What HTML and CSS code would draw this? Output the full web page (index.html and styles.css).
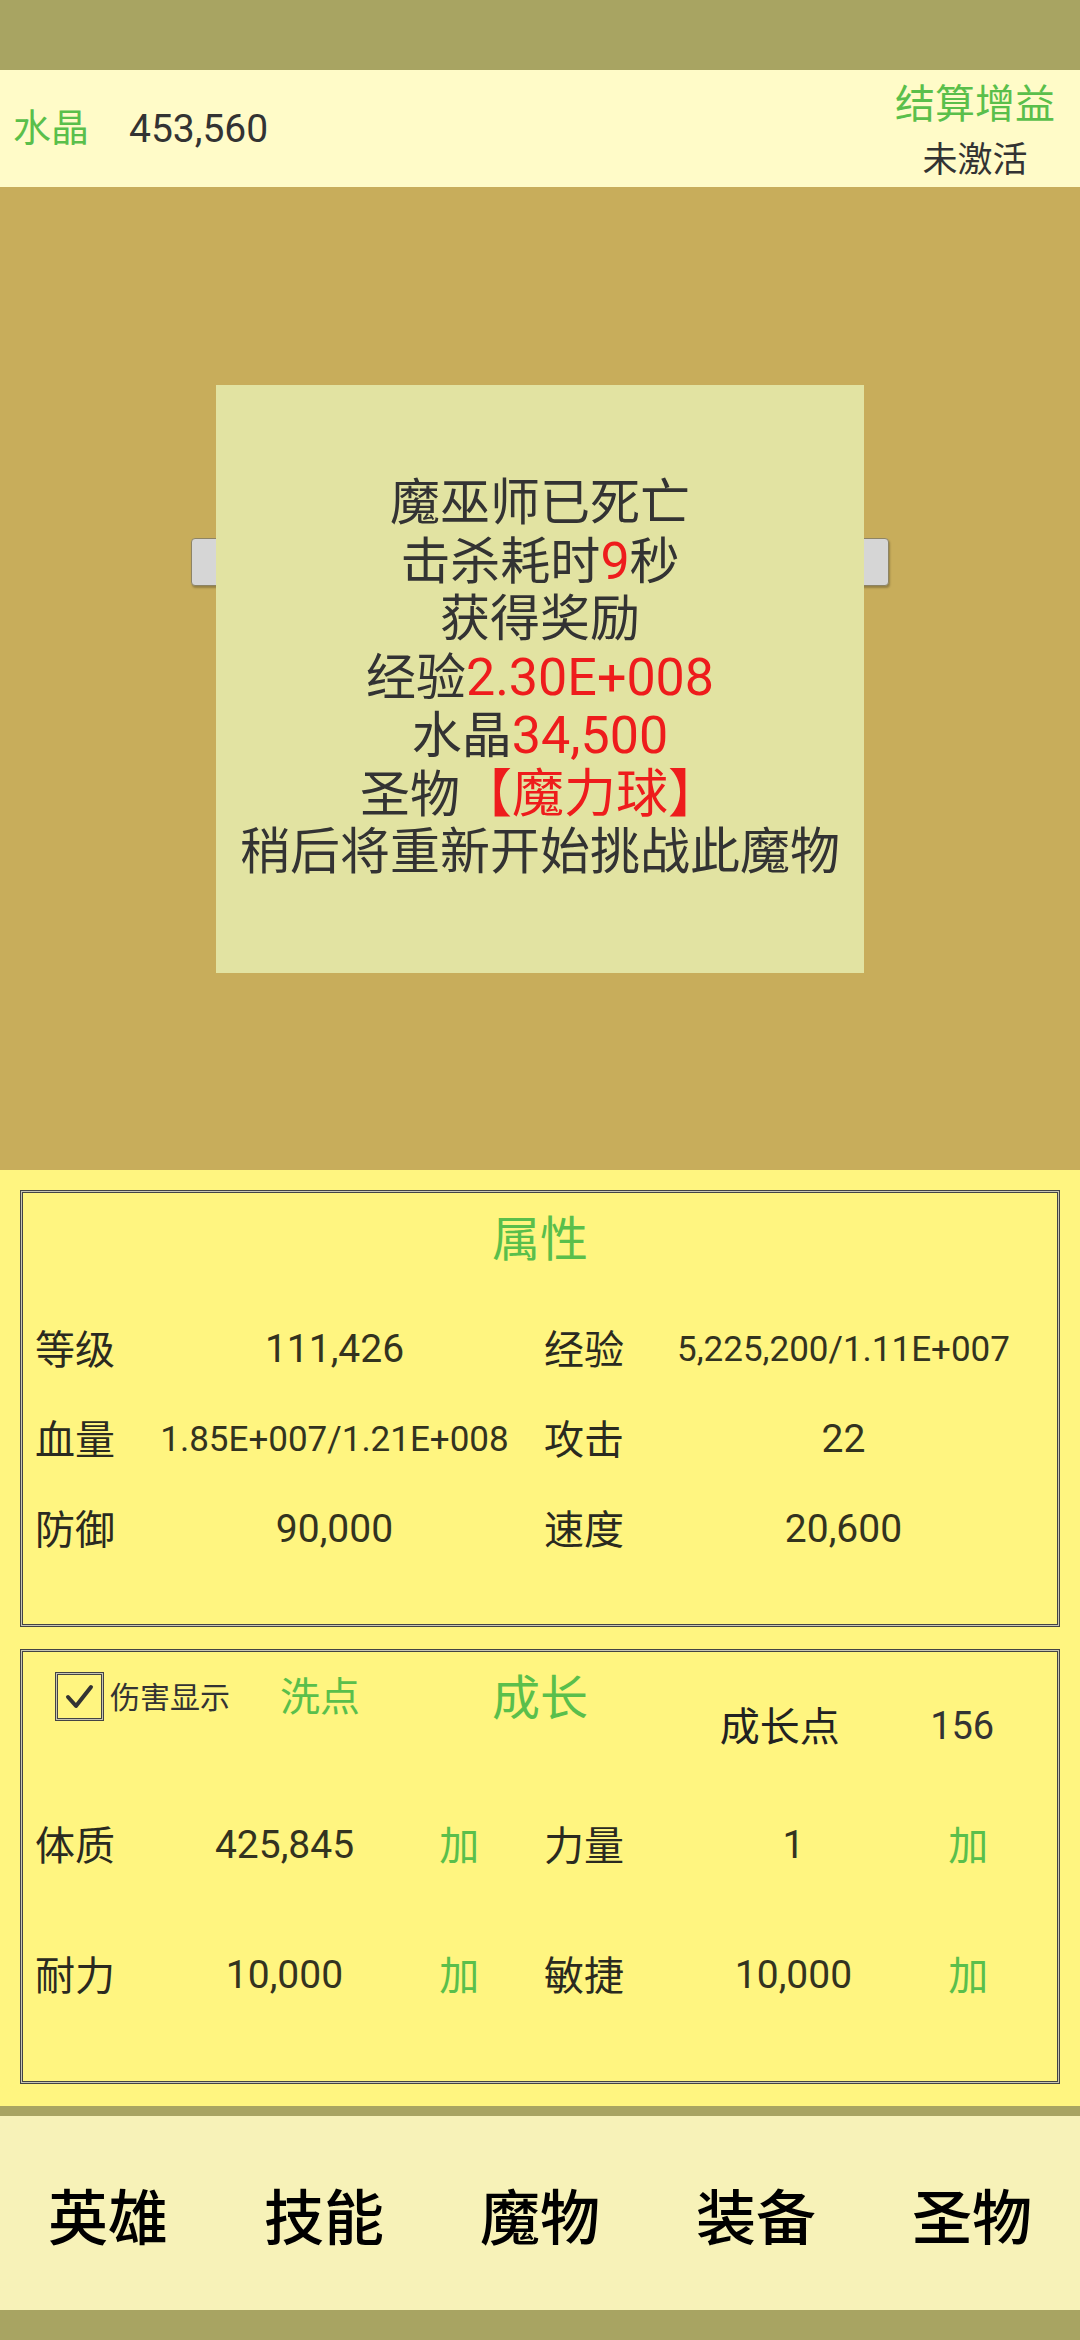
FILE: index.html
```html
<!DOCTYPE html>
<html>
<head>
  <meta charset="UTF-8">
  <title>魔物挑战</title>
  <link rel="stylesheet" href="styles.css">
</head>
<body>
  <div class="status-bar"></div>

  <header class="top-info">
    <div class="crystal">
      <span class="crystal-label">水晶</span>
      <span class="num crystal-value">453,560</span>
    </div>
    <div class="bonus">
      <span class="bonus-title">结算增益</span>
      <span class="bonus-state">未激活</span>
    </div>
  </header>

  <main class="arena">
    <div class="hp-bar"></div>
    <div class="result">
      <p>魔巫师已死亡</p>
      <p>击杀耗时<em class="red">9</em>秒</p>
      <p>获得奖励</p>
      <p>经验<em class="red">2.30E+008</em></p>
      <p>水晶<em class="red">34,500</em></p>
      <p>圣物<em class="red">【魔力球】</em></p>
      <p>稍后将重新开始挑战此魔物</p>
    </div>
  </main>

  <section class="stats">
    <div class="panel">
      <h2 class="panel-title">属性</h2>
      <div class="attr-grid">
        <span class="k">等级</span><span class="num v">111,426</span>
        <span class="k">经验</span><span class="num v long">5,225,200/1.11E+007</span>
        <span class="k">血量</span><span class="num v long">1.85E+007/1.21E+008</span>
        <span class="k">攻击</span><span class="num v">22</span>
        <span class="k">防御</span><span class="num v">90,000</span>
        <span class="k">速度</span><span class="num v">20,600</span>
      </div>
    </div>

    <div class="panel panel-grow">
      <div class="grow-head">
        <h2 class="panel-title">成长</h2>
        <div class="opts">
          <span class="check">
            <svg width="47" height="47" viewBox="0 0 47 47"><path d="M12 24 L20 33 L35 14" fill="none" stroke="#333" stroke-width="4" stroke-linecap="round" stroke-linejoin="round"/></svg>
          </span>
          <span class="opt-label">伤害显示</span>
          <span class="reset">洗点</span>
        </div>
        <span class="points-label">成长点</span>
        <span class="num points">156</span>
      </div>
      <div class="grow-grid">
        <span class="k">体质</span><span class="num v">425,845</span><span class="add">加</span>
        <span class="k">力量</span><span class="num v">1</span><span class="add">加</span>
        <span class="k">耐力</span><span class="num v">10,000</span><span class="add">加</span>
        <span class="k">敏捷</span><span class="num v">10,000</span><span class="add">加</span>
      </div>
    </div>
  </section>

  <nav class="tabs">
    <span>英雄</span>
    <span>技能</span>
    <span>魔物</span>
    <span>装备</span>
    <span>圣物</span>
  </nav>
</body>
</html>
```

FILE: styles.css
```css
/* page frame */
body {
  margin: 0;
  width: 1080px;
  height: 2340px;
  font-family: "Noto Sans CJK SC", sans-serif;
  color: #333;
  background: #a8a462;
}
.num {
  font-family: Roboto, "Noto Sans CJK SC", sans-serif;
}
.status-bar {
  height: 70px;
  background: #a8a462;
}

/* top info band */
.top-info {
  height: 117px;
  box-sizing: border-box;
  background: #fffbc8;
  display: flex;
  justify-content: space-between;
  align-items: center;
  padding: 0 25px 0 13px;
}
.crystal {
  display: flex;
  align-items: center;
  gap: 40px;
}
.crystal-label {
  color: #5abf4b;
  font-size: 38px;
  padding-bottom: 8px;
}
.crystal-value {
  font-size: 39px;
}
.bonus {
  display: flex;
  flex-direction: column;
  align-items: center;
}
.bonus-title {
  color: #5abf4b;
  font-size: 40px;
  line-height: 56px;
}
.bonus-state {
  font-size: 35px;
  line-height: 56px;
}

/* battle area */
.arena {
  height: 983px;
  background: #c8ad5b;
  position: relative;
  display: flex;
  align-items: center;
  justify-content: center;
}
.hp-bar {
  position: absolute;
  left: 191px;
  top: 351px;
  width: 698px;
  height: 48px;
  box-sizing: border-box;
  background: #d6d6d6;
  border: 1px solid #8d8465;
  border-radius: 4px;
  box-shadow: 1px 2px 2px rgba(0,0,0,0.25);
}
.result {
  position: relative;
  width: 648px;
  height: 588px;
  background: #e2e3a2;
  display: flex;
  flex-direction: column;
  justify-content: center;
  text-align: center;
  font-family: Roboto, "Noto Sans CJK SC", sans-serif;
  font-size: 50px;
  line-height: 57.5px;
  color: #333;
}
.result p {
  margin: 0;
}
.red {
  color: #ee1c1c;
  font-style: normal;
  font-size: 52px;
}

/* stat panels */
.stats {
  background: #fff580;
  padding: 20px 20px 22px;
  display: flex;
  flex-direction: column;
  gap: 22px;
}
.panel {
  border: 1px solid #444;
  box-shadow: inset 0 0 0 1px #c8c6b4, inset 0 0 0 2px #444;
  padding: 9px 6px 52px 14px;
}
.panel-grow {
  padding-bottom: 43px;
}
.panel-title {
  margin: 0 -6px 0 -14px;
  font-size: 48px;
  font-weight: 400;
  line-height: 70px;
  color: #5abf4b;
  text-align: center;
}
.k {
  font-size: 40px;
  color: #2a2a20;
  padding-bottom: 4px;
}
.v {
  font-size: 39px;
  color: #33331f;
  text-align: center;
}
.v.long {
  font-size: 35px;
}
.attr-grid {
  display: grid;
  grid-template-columns: 80px 1fr 80px 1fr;
  grid-auto-rows: 90px;
  align-items: center;
  margin-top: 34px;
}
.attr-grid .v {
  padding-left: 10px;
}

.grow-head {
  display: grid;
  grid-template-columns: repeat(6, 1fr);
  height: 121px;
}
.grow-head > * {
  grid-row: 1;
  align-self: start;
}
.grow-head .panel-title {
  grid-column: 1 / -1;
}
.opts {
  grid-column: 1 / 3;
  display: flex;
  align-items: center;
  height: 49px;
  margin-top: 13px;
  padding-left: 20px;
}
.check {
  width: 49px;
  height: 49px;
  box-sizing: border-box;
  border: 1px solid #444;
  box-shadow: inset 0 0 0 1px #c8c6b4, inset 0 0 0 2px #444;
  display: flex;
}
.opt-label {
  font-size: 30px;
  line-height: 1;
  margin: 0 0 3px 6px;
  color: #333;
}
.reset {
  font-size: 40px;
  line-height: 1;
  color: #5abf4b;
  margin: 0 0 5px 50px;
}
.points-label {
  grid-column: 5;
  font-size: 40px;
  line-height: 56px;
  margin-top: 37px;
  padding-left: 6px;
  color: #222;
}
.points {
  grid-column: 6;
  font-size: 38px;
  line-height: 56px;
  margin-top: 39px;
  padding-right: 12px;
  text-align: center;
}
.grow-grid {
  display: grid;
  grid-template-columns: repeat(6, 1fr);
  grid-auto-rows: 130px;
  align-items: center;
}
.grow-grid .v {
  padding-right: 10px;
}
.add {
  font-size: 40px;
  color: #5abf4b;
  text-align: center;
  padding-bottom: 4px;
}

/* bottom tabs */
.tabs {
  height: 194px;
  border-top: 10px solid #a8a462;
  border-bottom: 30px solid #a8a462;
  background: #f7f2b8;
  display: grid;
  grid-template-columns: repeat(5, 1fr);
  align-items: center;
  text-align: center;
  font-size: 60px;
  font-weight: 500;
  color: #000;
}
```
